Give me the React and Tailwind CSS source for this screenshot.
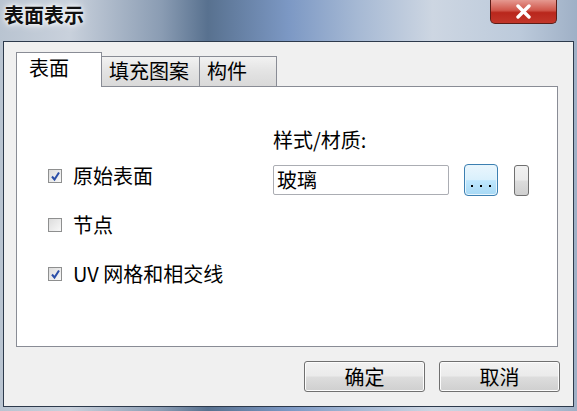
import React from "react";

const cjk = "font-['Noto_Sans_CJK_SC','Noto_Sans',sans-serif]";

const Check = ({ checked }) => (
  <span className="w-[14px] h-[14px] border border-[#8e8f8f] bg-[linear-gradient(135deg,#dcdcdc,#f8f8f8)] flex items-center justify-center shrink-0">
    {checked && (
      <svg width="11" height="11" viewBox="0 0 11 11">
        <path d="M2 5.5 L4.5 8.5 L9 1.5" stroke="#2a4ea8" strokeWidth="2" fill="none" />
      </svg>
    )}
  </span>
);

const Option = ({ checked, label }) => (
  <div className="flex items-center gap-[11px] h-[26px]">
    <Check checked={checked} />
    <span className="text-[20px] leading-none text-black">{label}</span>
  </div>
);

const Tab = ({ label, active, w }) => (
  <div
    className={
      active
        ? "h-[35px] bg-white border border-b-0 border-[#898c95] flex items-start pt-[3px] pl-[12px] relative z-10 -mb-px"
        : "h-[30px] bg-[linear-gradient(#f2f2f2,#e3e3e3_50%,#d9d9d9)] border border-b-0 border-[#898c95] flex items-start pt-[2px] pl-[7px] -ml-px"
    }
    style={{ width: w }}
  >
    <span className="text-[20px] leading-[24px] text-black">{label}</span>
  </div>
);

const Btn = ({ label }) => (
  <button className="w-[121px] h-[31px] border border-[#707070] rounded-[3px] bg-[linear-gradient(#f2f2f2_0%,#ebebeb_48%,#dddddd_52%,#cfcfcf_100%)] flex items-center justify-center text-[20px] leading-none text-black shadow-[inset_0_0_0_1px_#fcfcfc]">
    {label}
  </button>
);

export default function App() {
  return (
    <div className={`w-[577px] h-[411px] overflow-hidden flex flex-col bg-[linear-gradient(90deg,#b9c4d1_0%,#c9d1dc_12%,#8a9cb3_28%,#58718f_36%,#7c98c4_50%,#a6b9d4_62%,#cdd6e2_75%,#bccadb_90%,#9fb0c6_100%)] ${cjk}`}>
      <div className="h-[41px] shrink-0 flex items-start justify-between pl-[4px] pr-[20px]">
        <span className="text-[20px] leading-none mt-[5px] font-bold text-[#111] [text-shadow:0_0_8px_#ffffff,0_0_4px_#ffffff]">表面表示</span>
        <div className="w-[67px] h-[24px] rounded-b-[5px] border border-t-0 border-[#5b1d17] bg-[linear-gradient(#e59990_0%,#d0564a_45%,#b9271c_55%,#c2362a_100%)] flex items-center justify-center">
          <svg width="17" height="15" viewBox="0 0 17 15">
            <path d="M3 2 L14 13 M14 2 L3 13" stroke="#ffffff" strokeWidth="3.4" strokeLinecap="round" />
          </svg>
        </div>
      </div>
      <div className="mx-[3px] mb-[4px] flex-1 border border-[#2d3a4c] bg-[#f0f0f0] flex flex-col pt-[10px] pl-[12px] pr-[14px]">
        <div className="flex items-end">
          <Tab label="表面" active w={86} />
          <Tab label="填充图案" w={99} />
          <Tab label="构件" w={78} />
        </div>
        <div className="h-[261px] w-[542px] bg-white border border-[#898c95] flex">
          <div className="w-[256px] pl-[31px] pt-[76px] flex flex-col gap-[23px]">
            <Option checked label="原始表面" />
            <Option label="节点" />
            <Option checked label="UV 网格和相交线" />
          </div>
          <div className="pt-[43px] flex flex-col">
            <span className="text-[20px] leading-none text-black">样式/材质:</span>
            <div className="flex items-center mt-[14px]">
              <div className="w-[176px] h-[30px] border border-[#abadb3] rounded-[2px] bg-white flex items-center pl-[3px] text-[20px] leading-none text-black">
                玻璃
              </div>
              <div className="ml-[15px] w-[34px] h-[32px] rounded-[4px] border border-[#3c7fb1] bg-[linear-gradient(#eaf6fd,#d9f0fc_50%,#bee6fd_52%,#a7d9f5)] shadow-[inset_0_0_0_1px_#e6f5fd] flex items-end justify-center pb-[8px] gap-[7px]">
                <span className="w-[2px] h-[2px] bg-black" />
                <span className="w-[2px] h-[2px] bg-black" />
                <span className="w-[2px] h-[2px] bg-black" />
              </div>
              <div className="ml-[16px] w-[15px] h-[31px] rounded-[3px] border border-[#707070] bg-[linear-gradient(#f2f2f2,#ebebeb_48%,#dddddd_52%,#cfcfcf)]" />
            </div>
          </div>
        </div>
        <div className="flex justify-end gap-[14px] mt-[14px] -mr-[1px]">
          <Btn label="确定" />
          <Btn label="取消" />
        </div>
      </div>
    </div>
  );
}
